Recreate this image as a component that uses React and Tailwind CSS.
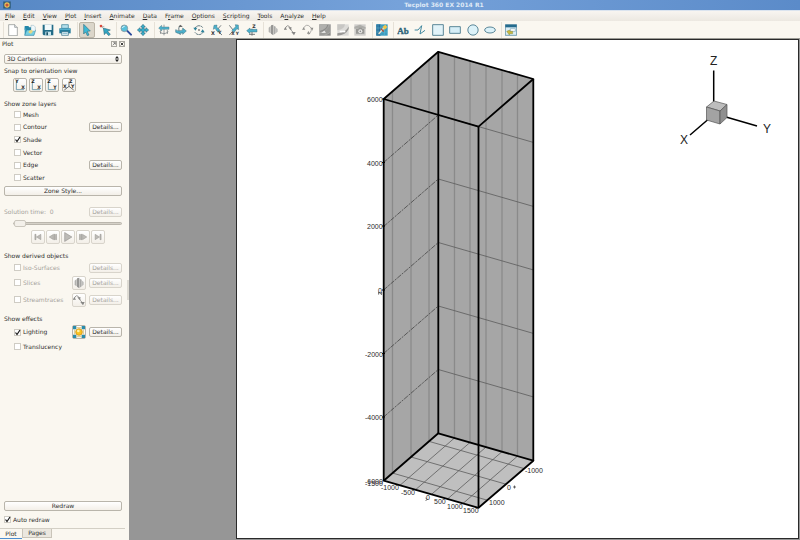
import React, { useState } from 'react';
import clsx from 'clsx';

const MENUS = ['File', 'Edit', 'View', 'Plot', 'Insert', 'Animate', 'Data', 'Frame', 'Options', 'Scripting', 'Tools', 'Analyze', 'Help'];
const MNEMONICS = { Animate: 0, Analyze: 1, Frame: 1 };

const Icon = ({ children, className = 'size-3' }) => (
  <svg viewBox="0 0 36 36" className={clsx('shrink-0', className)} aria-hidden="true" fontFamily="DejaVu Sans" fontWeight="bold">
    {children}
  </svg>
);

const NewIcon = () => (
  <Icon>
    <path d="M5 2h18l8 8v25H5z" fill="#fff" stroke="#666b6e" strokeWidth="1.6" />
    <path d="M23 2v8h8" fill="#e4e8ea" stroke="#666b6e" strokeWidth="1.6" />
  </Icon>
);

const OpenIcon = () => (
  <Icon>
    <path d="M2 6h11l3 4h13v8H2z" fill="#2386a8" />
    <path d="M2 10v24h28V18H8z" fill="#3b9fc0" />
    <path d="M8 18h27l-5 16H2z" fill="#76cfe2" stroke="#24799a" strokeWidth="1.5" />
    <path d="M21 4h8l5 5v12H21z" fill="#eef7fa" stroke="#6796a6" />
    <path d="M14 21l8-4 5 5-6 7-7-3z" fill="#e6d884" />
  </Icon>
);

const SaveIcon = () => (
  <Icon>
    <path d="M2 2h32v32H5l-3-3z" fill="#226b86" />
    <path d="M8 2h21v16H8z" fill="#f2fafc" />
    <path d="M10 23h17v11H10z" fill="#c9e7ef" />
    <path d="M13 25h5v9h-5z" fill="#1c5268" />
  </Icon>
);

const PrintIcon = () => (
  <Icon>
    <path d="M8 2h20v11H8z" fill="#b5dfeb" stroke="#337c96" strokeWidth="2" />
    <path d="M1 13h34v15H1z" fill="#247c9d" />
    <path d="M3 14h30v4H3z" fill="#54b0ce" />
    <path d="M8 23h20v11H8z" fill="#eaf7fb" stroke="#2b677e" strokeWidth="2" />
    <path d="M11 28h14" stroke="#4a9ab4" strokeWidth="2" />
  </Icon>
);

const SelectIcon = () => (
  <Icon>
    <path d="M8 1l20 20-9 1 5 11-5 2-5-11-6 6z" fill="#3cb8d4" stroke="#2a6074" strokeWidth="1.6" />
  </Icon>
);

const AdjustIcon = () => (
  <Icon>
    <path d="M4 9l12-2M6 6l9 9" stroke="#9a9a9a" strokeWidth="2" />
    <circle cx="6" cy="6" r="4" fill="#d9483b" />
    <path d="M13 12l21 6-8 4 8 9-5 4-8-9-5 6z" fill="#32a6c3" stroke="#2a6074" strokeWidth="1.6" />
  </Icon>
);

const ZoomIcon = () => (
  <Icon>
    <path d="M21 20l12 12" stroke="#2b4a9c" strokeWidth="6" strokeLinecap="round" />
    <circle cx="13" cy="13" r="10" fill="#58c1dc" stroke="#87979d" strokeWidth="2.5" />
    <path d="M7 12q2-5 7-5" stroke="#e2f7fc" strokeWidth="3" fill="none" />
  </Icon>
);

const MoveIcon = () => (
  <Icon>
    <path
      d="M18 1l7 8h-4v6h6v-4l8 7-8 7v-4h-6v6h4l-7 8-7-8h4v-6H9v4l-8-7 8-7v4h6V9h-4z"
      fill="#38aeca"
      stroke="#275f73"
      strokeWidth="1.6"
    />
  </Icon>
);

const SphereRotateIcon = () => (
  <Icon>
    <path d="M18 2v32M5 23q12 12 26 0M8 18v12M28 18v12" stroke="#6a7275" strokeWidth="2" fill="none" />
    <path d="M2 12l9-8v5h22v7H11v5z" fill="#4bb0cb" stroke="#4a7786" strokeWidth="1.3" />
  </Icon>
);

const RolloverIcon = () => (
  <Icon>
    <path d="M15 4q-6 8-3 17l4 12" stroke="#4b6670" strokeWidth="2.5" fill="none" />
    <path d="M2 17v8q10 7 21 1v5l11-10-11-9v6q-12 6-21-1z" fill="#4bb0cb" stroke="#3b6c7d" strokeWidth="1.5" />
    <path d="M17 2l6 7H10z" fill="#666" />
  </Icon>
);

const TwistIcon = () => (
  <Icon>
    <path d="M6 12A14 14 0 0 1 30 12M31 23A14 14 0 0 1 6 25" stroke="#4b6670" strokeWidth="3" fill="none" strokeDasharray="7 2" />
    <path d="M1 11h12l-6 9zM35 25H23l6-9z" fill="#2e839c" />
    <circle cx="18" cy="18" r="2.5" fill="#333" />
  </Icon>
);

const RotateXIcon = () => (
  <Icon>
    <path d="M17 19l13-15M18 19l15 14" stroke="#5c6366" strokeWidth="2.5" />
    <path d="M9 4l9-1-1 6 10 10-6 6L12 13l-5 3z" fill="#4bb0cb" stroke="#3b6c7d" strokeWidth="1.3" />
    <text x="0" y="32" fontSize="15" fill="#333">X</text>
    <text x="22" y="31" fontSize="13" fill="#333">Y</text>
  </Icon>
);

const RotateYIcon = () => (
  <Icon>
    <path d="M16 19L4 4M17 19L4 33" stroke="#5c6366" strokeWidth="2.5" />
    <path d="M31 3l-9-1 1 6-11 11 6 6 9-11 5 3z" fill="#4bb0cb" stroke="#3b6c7d" strokeWidth="1.3" />
    <text x="10" y="34" fontSize="13" fill="#333">X</text>
    <text x="23" y="32" fontSize="13" fill="#333">Y</text>
  </Icon>
);

const RotateZIcon = () => (
  <Icon>
    <path d="M18 14V35M9 31h18" stroke="#5c6366" strokeWidth="2.5" />
    <path d="M2 20l10-8v4h21v8H12v5z" fill="#4bb0cb" stroke="#3b6c7d" strokeWidth="1.3" />
    <text x="19" y="13" fontSize="14" fill="#333">Z</text>
  </Icon>
);

const SliceIcon = () => (
  <Icon>
    <path d="M5 11l6-5v22l-6-4z" fill="#b1b1af" />
    <path d="M12 4l7-2v32l-7-5z" fill="#969694" />
    <path d="M20 5l6 3v20l-6 4z" fill="#aaaaa8" />
    <path d="M27 11l5 4v8l-5 4z" fill="#bdbdbb" />
  </Icon>
);

const StreamtraceIcon = () => (
  <Icon>
    <path d="M2 17Q10-4 19 12q3 9 10 15" stroke="#868684" strokeWidth="2.5" fill="none" />
    <path d="M0 17l4-8 5 8zM13 10h10l-3 9zM22 24h13l-5 10z" fill="#868684" />
  </Icon>
);

const StreamtraceEndIcon = () => (
  <Icon>
    <path d="M2 17Q12-5 25 9q8 9-5 23" stroke="#a09f9c" strokeWidth="2.5" fill="none" />
    <path d="M1 17l4-7 5 7zM26 11h8l-3 9zM15 29l4-8 6 9z" fill="#8e8e8b" />
  </Icon>
);

const ContourAddIcon = () => (
  <Icon>
    <path d="M1 1h34v34H1z" fill="#8b8b89" />
    <path d="M1 1h24Q23 17 1 21z" fill="#b0b0ad" />
    <path d="M1 26q23-4 29-24h5v22q-10 8-21 11H1z" fill="#9b9b98" stroke="#d9d9d6" />
    <path d="M6 27l10-7 5 6z" fill="#efefed" />
  </Icon>
);

const ContourRemoveIcon = () => (
  <Icon>
    <path d="M1 1h34v34H1z" fill="#dddcd9" />
    <path d="M1 1h23Q22 16 1 19z" fill="#c8c7c4" />
    <path d="M1 28q28-3 34-21v8Q27 33 1 35z" fill="#999896" />
    <path d="M8 20h17v5H8z" fill="#fff" />
  </Icon>
);

const ExtractIcon = () => (
  <Icon>
    <path d="M1 1h34v34H1z" fill="#cfcecb" />
    <path d="M1 8l17-6 17 8v4H1z" fill="#adada9" />
    <path d="M6 15h7l2-4h8l2 4h6v14H6z" fill="#989895" />
    <circle cx="19" cy="22" r="6" fill="#e9e9e6" />
    <circle cx="19" cy="22" r="2.5" fill="#888" />
  </Icon>
);

const ProbeIcon = () => (
  <Icon>
    <path d="M1 1h34v34H1z" fill="#3a9cc0" />
    <path d="M1 1h13v34H1z" fill="#226b99" />
    <path d="M6 1v34M14 1v34M1 12h34M1 24h34M25 1v34" stroke="#67bad2" strokeWidth="1.5" />
    <path d="M8 30L26 9" stroke="#eee7d6" strokeWidth="4" />
    <path d="M19 9l9-7 6 7-8 8z" fill="#f1c64b" />
    <path d="M15 14l8 9" stroke="#bb4a2b" strokeWidth="4" />
  </Icon>
);

const TextIcon = () => (
  <Icon>
    <text x="1" y="29" fontSize="27" fontFamily="Liberation Serif" fill="#2d6379" stroke="#2d6379">Ab</text>
  </Icon>
);

const PolylineIcon = () => (
  <Icon>
    <path d="M2 18h10L23 5l-5 25 15-11" stroke="#348099" strokeWidth="2.8" fill="none" />
  </Icon>
);

const SquareIcon = () => (
  <Icon>
    <path d="M2 2h32v32H2z" fill="#e2f3f9" stroke="#3f7186" strokeWidth="2.5" />
  </Icon>
);

const RectangleIcon = () => (
  <Icon>
    <path d="M2 8h32v20H2z" fill="#d6eef7" stroke="#3f7186" strokeWidth="2.5" />
  </Icon>
);

const CircleIcon = () => (
  <Icon>
    <circle cx="18" cy="18" r="15.5" fill="#dcf2f9" stroke="#3f7186" strokeWidth="2.5" />
  </Icon>
);

const EllipseIcon = () => (
  <Icon>
    <ellipse cx="18" cy="18" rx="16" ry="9" fill="#dcf2f9" stroke="#3f7186" strokeWidth="2.5" />
  </Icon>
);

const FrameIcon = () => (
  <Icon>
    <path d="M1 2h34v32H1z" fill="#dceef5" stroke="#3b758f" strokeWidth="2" />
    <path d="M1 2h34v8H1z" fill="#246b8d" />
    <path d="M16 14h15v8H16z" fill="#fff" stroke="#5f92a6" strokeWidth="1.5" />
    <path d="M5 22l9-4 1 4h8v7h-9l-1 4z" fill="#c9ba3e" stroke="#6d7234" />
  </Icon>
);

const LightIcon = () => (
  <Icon>
    <path d="M0 0h10v10H0zM26 0h10v10H26zM0 26h10v10H0zM26 26h10v10H26z" fill="#2a8cab" />
    <path d="M10 5h16M10 31h16M5 10v16M31 10v16" stroke="#d9c98b" strokeWidth="3" />
    <circle cx="18" cy="18" r="10" fill="#fbc31f" stroke="#c98a12" strokeWidth="2" />
    <circle cx="16" cy="15" r="4" fill="#fff3a6" />
  </Icon>
);

const PlaneIcon = ({ up, side }) => (
  <Icon>
    <path d="M7 6v26h23" stroke="#5b8fa3" strokeWidth="2.5" fill="none" />
    <text x="4" y="12" fontSize="14" fill="#222">{up}</text>
    <text x="22" y="30" fontSize="14" fill="#222">{side}</text>
  </Icon>
);

const IsoViewIcon = () => (
  <Icon>
    <path d="M18 8v14L4 33M18 22l14 11" stroke="#4c4f50" strokeWidth="2.5" fill="none" />
    <text x="18" y="12" fontSize="14" fill="#222">Z</text>
    <text x="0" y="27" fontSize="14" fill="#222">X</text>
    <text x="24" y="27" fontSize="14" fill="#222">Y</text>
  </Icon>
);

const TOOL_GROUPS = [
  {
    className: 'w-[71px] grid-cols-4 ml-[3px] mr-[3px]',
    tools: [['New', NewIcon], ['Open', OpenIcon], ['Save', SaveIcon], ['Print', PrintIcon]]
  },
  { className: 'w-[37px] grid-cols-2 mr-[2px]', tools: [['Select', SelectIcon], ['Adjust', AdjustIcon]] },
  { className: 'w-[36px] grid-cols-2 mr-[2px]', tools: [['Zoom', ZoomIcon], ['Translate', MoveIcon]] },
  {
    className: 'w-[107px] grid-cols-6 mr-[2px]',
    tools: [
      ['Spherical rotate', SphereRotateIcon],
      ['Rollerball rotate', RolloverIcon],
      ['Twist', TwistIcon],
      ['Rotate about X', RotateXIcon],
      ['Rotate about Y', RotateYIcon],
      ['Rotate about Z', RotateZIcon]
    ]
  },
  {
    className: 'w-[106px] grid-cols-6 mr-[3px]',
    tools: [
      ['Slice', SliceIcon],
      ['Streamtrace', StreamtraceIcon],
      ['Streamtrace end', StreamtraceEndIcon],
      ['Add contour', ContourAddIcon],
      ['Remove contour', ContourRemoveIcon],
      ['Extract', ExtractIcon]
    ]
  },
  { className: 'w-[18px] grid-cols-1 mr-[3px]', tools: [['Probe', ProbeIcon]] },
  {
    className: 'w-[106px] grid-cols-6 mr-[2px]',
    tools: [
      ['Text', TextIcon],
      ['Polyline', PolylineIcon],
      ['Square', SquareIcon],
      ['Rectangle', RectangleIcon],
      ['Circle', CircleIcon],
      ['Ellipse', EllipseIcon]
    ]
  },
  { className: 'w-[19px] grid-cols-1', tools: [['Create frame', FrameIcon]] }
];

const TitleBar = () => (
  <header className="flex h-[10px] shrink-0 items-center bg-linear-to-r from-[#5788c5] via-[#76a2da] to-[#5b8bc9] px-[3px]">
    <Icon className="size-2">
      <path d="M1 2h34v32H1z" fill="#315d78" />
      <circle cx="18" cy="18" r="12" fill="#e8c35a" />
      <circle cx="18" cy="18" r="7" fill="#c4523a" />
    </Icon>
    <h1 className="flex-1 pl-[80px] text-center font-['DejaVu_Sans'] text-[6px] leading-[10px] font-bold text-[#dfe9f6]">
      Tecplot 360 EX 2014 R1
    </h1>
  </header>
);

const MenuBar = () => (
  <nav className="flex h-[11px] shrink-0 items-center border-t border-[#dbe4ef] bg-linear-to-b from-[#f8f5f1] to-[#ece8e1] px-[1px]">
    {MENUS.map((menu) => {
      const i = MNEMONICS[menu] || 0;
      return (
        <button key={menu} type="button" className="px-1 leading-[10px]">
          {menu.slice(0, i)}
          <span className="underline">{menu[i]}</span>
          {menu.slice(i + 1)}
        </button>
      );
    })}
  </nav>
);

const ToolBar = () => {
  const [active, setActive] = useState('Select');
  return (
    <div className="flex h-[18px] shrink-0 items-center border-b border-[#9b9b95] bg-[#faf7f0]">
      {TOOL_GROUPS.map((group) => (
        <div key={group.tools[0][0]} className={clsx('grid shrink-0 justify-items-center border-l border-[#e6e1d7]', group.className)}>
          {group.tools.map(([name, ToolIcon]) => (
            <button
              key={name}
              type="button"
              aria-label={name}
              onClick={() => setActive(name)}
              className={clsx(
                'grid size-4 place-items-center rounded-xs',
                name === active && 'border border-[#bcb5a7] bg-[#dbd6ca]'
              )}
            >
              <ToolIcon />
            </button>
          ))}
        </div>
      ))}
    </div>
  );
};

const PushButton = ({ children, disabled, className, ...rest }) => (
  <button
    type="button"
    disabled={disabled}
    className={clsx(
      'grid place-items-center rounded-xs border bg-linear-to-b from-white to-[#f3efe8] leading-[8px]',
      disabled ? 'border-[#d8d4cb] text-[#a5a29c]' : 'border-[#b9b5ab]',
      className
    )}
    {...rest}
  >
    {children}
  </button>
);

const Details = ({ disabled, className }) => (
  <PushButton disabled={disabled} className={clsx('h-[10px] w-[33px] shrink-0', className)}>
    Details...
  </PushButton>
);

const CheckBox = ({ label, defaultChecked, disabled }) => (
  <label className={clsx('flex items-center gap-[2px]', disabled && 'text-[#a5a29c]')}>
    <span className="grid size-[7px] shrink-0">
      <input
        type="checkbox"
        defaultChecked={defaultChecked}
        disabled={disabled}
        className="peer col-start-1 row-start-1 size-[7px] appearance-none border border-[#cfccc4] bg-white"
      />
      <svg viewBox="0 0 14 14" className="pointer-events-none col-start-1 row-start-1 hidden size-[7px] peer-checked:block">
        <path d="M3 7l3 4 6-9" stroke="#1a1a1a" strokeWidth="2.4" fill="none" />
      </svg>
    </span>
    {label}
  </label>
);

const OptionRow = ({ label, checked, disabled, details, icon, className = 'h-[13px]' }) => (
  <div className={clsx('flex items-center pl-[10px]', className)}>
    <CheckBox label={label} defaultChecked={checked} disabled={disabled} />
    <span className="flex-1" />
    {icon && (
      <PushButton disabled={disabled} aria-label={`${label} tool`} className="mr-[3px] size-[14px] shrink-0">
        {icon}
      </PushButton>
    )}
    {details && <Details disabled={disabled} />}
  </div>
);

const PLAYER = [
  ['First', 'M4 6h5v24H4zM31 6v24L11 18z'],
  ['Step back', 'M20 6v24L1 18zM23 6h4v24h-4zM30 6h4v24h-4z'],
  ['Play', 'M6 2l26 16L6 34z'],
  ['Step forward', 'M16 6v24l19-12zM9 6h4v24H9zM2 6h4v24H2z'],
  ['Last', 'M5 6v24l20-12zM27 6h5v24h-5z']
];

const Sidebar = () => (
  <aside className="flex w-[127px] shrink-0 flex-col bg-[#faf7f0]">
    <div className="flex h-[10px] shrink-0 items-center gap-[2px] pr-[2px] pl-[2px]">
      <h2 className="flex-1">Plot</h2>
      <button type="button" aria-label="Float" className="grid size-[6px] place-items-center border border-[#aaa7a0]">
        <svg viewBox="0 0 6 6" className="size-1"><path d="M1 5l4-4M2 1h3v3" stroke="#555" fill="none" /></svg>
      </button>
      <button type="button" aria-label="Close" className="grid size-[6px] place-items-center border border-[#aaa7a0]">
        <svg viewBox="0 0 6 6" className="size-1"><path d="M1 1l4 4M5 1L1 5" stroke="#333" strokeWidth="1.4" /></svg>
      </button>
    </div>

    <div className="flex flex-1 flex-col pt-[5px] pr-[5px] pl-1">
      <div className="grid items-center">
        <select
          aria-label="Plot type"
          className="col-start-1 row-start-1 h-[10px] appearance-none rounded-xs border border-[#b9b5ab] bg-linear-to-b from-white to-[#f1ede5] pl-[2px] leading-[8px]"
        >
          <option>3D Cartesian</option>
          <option>2D Cartesian</option>
          <option>XY Line</option>
        </select>
        <svg viewBox="0 0 4 6" className="pointer-events-none col-start-1 row-start-1 mr-[3px] h-[6px] w-1 justify-self-end">
          <path d="M2 0l2 2.4H0zM2 6l2-2.4H0z" fill="#222" />
        </svg>
      </div>

      <p className="h-[14px] leading-[14px]">Snap to orientation view</p>
      <div className="flex h-[14px] items-center gap-[2px] pl-[9px]">
        <PushButton aria-label="XY view" className="size-[14px]"><PlaneIcon up="Y" side="X" /></PushButton>
        <PushButton aria-label="XZ view" className="size-[14px]"><PlaneIcon up="Z" side="X" /></PushButton>
        <PushButton aria-label="YZ view" className="size-[14px]"><PlaneIcon up="Z" side="Y" /></PushButton>
        <PushButton aria-label="Isometric view" className="ml-[1px] size-[14px]"><IsoViewIcon /></PushButton>
      </div>

      <h3 className="mt-[6px] h-[10px] leading-[12px]">Show zone layers</h3>
      <div className="grid h-[76px] grid-rows-6">
        <OptionRow label="Mesh" />
        <OptionRow label="Contour" details />
        <OptionRow label="Shade" checked />
        <OptionRow label="Vector" />
        <OptionRow label="Edge" details />
        <OptionRow label="Scatter" />
      </div>
      <PushButton className="mt-[2px] h-[10px]">Zone Style...</PushButton>

      <div className="mt-[10px] flex h-[11px] items-center justify-between text-[#a5a29c]">
        <label htmlFor="solution-time" className="whitespace-pre">Solution time:  0</label>
        <Details disabled />
      </div>
      <input
        id="solution-time"
        type="range"
        min="0"
        max="10"
        defaultValue="0"
        disabled
        className="ml-[9px] h-[12px] appearance-none bg-transparent [&::-webkit-slider-runnable-track]:h-[3px] [&::-webkit-slider-runnable-track]:rounded-full [&::-webkit-slider-runnable-track]:border [&::-webkit-slider-runnable-track]:border-[#bab6ad] [&::-webkit-slider-runnable-track]:bg-[#d5d1c8] [&::-webkit-slider-thumb]:-mt-[3px] [&::-webkit-slider-thumb]:h-[7px] [&::-webkit-slider-thumb]:w-3 [&::-webkit-slider-thumb]:appearance-none [&::-webkit-slider-thumb]:rounded-xs [&::-webkit-slider-thumb]:border [&::-webkit-slider-thumb]:border-[#cbc7be] [&::-webkit-slider-thumb]:bg-[#f3f0ea]"
      />
      <div className="mt-[1px] flex h-[14px] gap-[1px] pl-[27px]">
        {PLAYER.map(([name, d]) => (
          <PushButton key={name} disabled aria-label={name} className="size-[14px]">
            <Icon className={name === 'Play' ? 'size-[10px]' : 'size-2'}>
              <path d={d} fill="#bdbbb7" stroke="#8f8d89" strokeWidth="2" />
            </Icon>
          </PushButton>
        ))}
      </div>

      <h3 className="mt-[7px] h-[10px] leading-[10px]">Show derived objects</h3>
      <OptionRow label="Iso-Surfaces" disabled details />
      <OptionRow label="Slices" disabled details icon={<SliceIcon />} className="h-[17px]" />
      <OptionRow label="Streamtraces" disabled details icon={<StreamtraceIcon />} className="h-[17px]" />

      <h3 className="mt-[6px] h-[10px] leading-[10px]">Show effects</h3>
      <OptionRow label="Lighting" checked details icon={<LightIcon />} className="h-[16px]" />
      <OptionRow label="Translucency" />

      <PushButton className="mt-auto h-[10px]">Redraw</PushButton>
      <div className="my-[3px] flex h-[11px] items-center">
        <CheckBox label="Auto redraw" defaultChecked />
      </div>
    </div>

    <div role="tablist" className="mr-[2px] flex h-[12px] shrink-0 items-start border-t border-[#d3cfc5]">
      <button type="button" role="tab" aria-selected="true" className="h-[10px] w-[22px] border-b border-[#4d8ed0] leading-[9px]">
        Plot
      </button>
      <button type="button" role="tab" aria-selected="false" className="h-[9px] w-[30px] border border-t-0 border-[#c9c4b9] bg-[#ebe7df] leading-[8px]">
        Pages
      </button>
    </div>
  </aside>
);

// plot geometry, in window units
const LEVELS = [115, 179, 242.5, 306, 369.5];
const LEFT_WALL = [392.5, 411, 429];
const RIGHT_WALL = [454.5, 470, 486, 502, 517.5];
const onLeft = (x) => ((438.3 - x) / 54.6) * 47.4;
const onRight = (x) => ((x - 438.3) / 95) * 27.4;

const LABELS = [
  ['6000', 367, 102],
  ['4000', 367, 166],
  ['2000', 367, 229],
  ['0', 378, 293],
  ['-2000', 365, 357],
  ['-4000', 365, 420],
  ['-6000', 365, 484],
  ['-1500', 365, 486],
  ['-1000', 381, 490],
  ['-500', 401, 495],
  ['0', 426, 500],
  ['500', 434, 504],
  ['1000', 447, 509],
  ['1500', 463, 513],
  ['1000', 489, 505],
  ['0', 507, 490],
  ['-1000', 525, 473]
];

const Plot3D = () => (
  <svg viewBox="237 40 561 498" className="size-full" role="img" aria-label="3D plot" fontFamily="Liberation Sans">
    <path d="M383.7 99L438.3 51.8L533.3 79V460.7L438.3 433.3L383.7 480.7z" fill="#a6a6a6" />
    <path d="M383.7 480.7L438.3 433.3L533.3 460.7L478.5 507.8z" fill="#bfbfbf" />

    <g stroke="#8a8a8a" strokeWidth="1.3">
      {LEFT_WALL.map((x) => (
        <path key={x} d={`M${x} ${51.8 + onLeft(x)}V${433.3 + onLeft(x)}`} />
      ))}
      {RIGHT_WALL.map((x) => (
        <path key={x} d={`M${x} ${51.8 + onRight(x)}V${433.3 + onRight(x)}`} />
      ))}
    </g>

    <g stroke="#5c5c5c" strokeWidth="0.8" fill="none">
      {LEVELS.map((y) => (
        <React.Fragment key={y}>
          <path d={`M383.7 ${y + 47.4}L438.3 ${y}`} stroke="#444" strokeDasharray="5 1 2 1" />
          <path d={`M438.3 ${y}L533.3 ${y + 27.4}`} />
        </React.Fragment>
      ))}
      {LEFT_WALL.map((x) => (
        <path key={x} d={`M${x} ${433.3 + onLeft(x)}l95 27.2`} />
      ))}
      {RIGHT_WALL.map((x) => (
        <path key={x} d={`M${x} ${433.3 + onRight(x)}l-54.6 47.4`} />
      ))}
    </g>

    <g stroke="#000" strokeWidth="1.8" fill="none" strokeLinejoin="round">
      <path d="M383.7 99L438.3 51.8L533.3 79L478.5 126.6z" />
      <path d="M383.7 480.7L438.3 433.3L533.3 460.7L478.5 507.8z" />
      <path d="M383.7 99V480.7M438.3 51.8V433.3M533.3 79V460.7M478.5 126.6V507.8" />
    </g>
    <path d="M382 99h3M382 162.5h3M382 226h3M382 290h3M382 353.5h3M382 417h3" stroke="#000" />

    <g fontSize="7" fill="#2a2a2a">
      {LABELS.map(([text, x, y], i) => (
        <text key={i} x={x} y={y}>{text}</text>
      ))}
    </g>
    {/* axis title marks */}
    <g stroke="#333" strokeWidth="0.7" fill="none">
      <path d="M378.6 294.6v-2.6l3 2.6v-2.6" />
      <path d="M425.5 500.5l2-1-2-1.4" />
      <path d="M513 487h3M514.5 485.5v3" />
    </g>

    <g stroke="#000" strokeWidth="1.5">
      <path d="M713.7 70.5V102M690 135L708 119.5M726 117L757 126" />
    </g>
    <g stroke="#555" strokeWidth="0.7" strokeLinejoin="round">
      <path d="M706.5 107L714 101L727 104.5L720 111z" fill="#bdbdbd" />
      <path d="M706.5 107L720 111V124L706.5 120z" fill="#a3a3a3" />
      <path d="M720 111L727 104.5V117.5L720 124z" fill="#8f8f8f" />
    </g>
    <g fontSize="12" fill="#222">
      <text x="710" y="65">Z</text>
      <text x="763" y="133">Y</text>
      <text x="680" y="144">X</text>
    </g>
  </svg>
);

const App = () => (
  <div className="flex h-screen flex-col overflow-hidden bg-[#faf7f0] font-['DejaVu_Sans',sans-serif] text-[6px] leading-[10px] text-[#2e2e2e]">
    <TitleBar />
    <MenuBar />
    <ToolBar />
    <div className="flex min-h-0 flex-1">
      <Sidebar />
      {/* Splitter */}
      <div className="flex w-[2px] shrink-0 items-center bg-[#faf7f0]">
        <span className="h-5 w-full bg-[#dedbd3]" />
      </div>
      <main className="flex min-w-0 flex-1 bg-[#969696] pr-[1px] pb-[1px] pl-[107px]">
        <div className="min-w-0 flex-1 border border-[#2a2a2a] bg-white">
          <Plot3D />
        </div>
      </main>
    </div>
  </div>
);

export default App;
